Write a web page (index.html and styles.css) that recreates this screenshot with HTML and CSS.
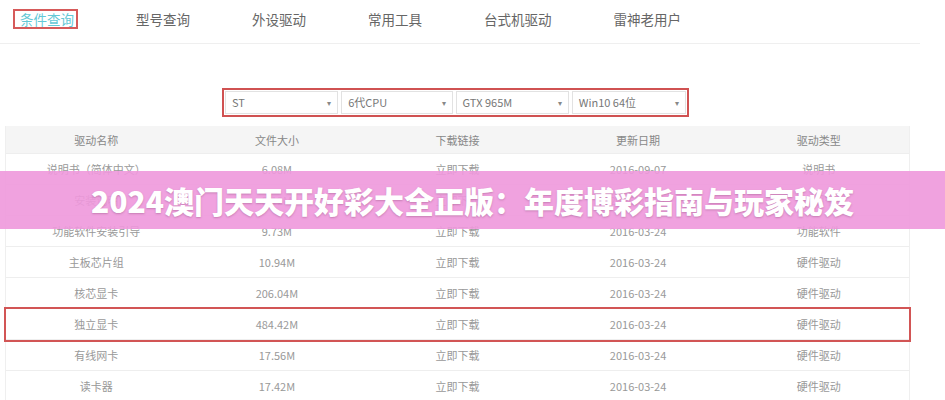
FILE: index.html
```
<!DOCTYPE html>
<html lang="zh-CN">
<head>
  <meta charset="UTF-8" />
  <title>驱动下载</title>
  <link rel="stylesheet" href="styles.css">
</head>
<body>
  <div class="nav">
    <span class="nav-item active">条件查询</span>
    <span class="nav-item">型号查询</span>
    <span class="nav-item">外设驱动</span>
    <span class="nav-item">常用工具</span>
    <span class="nav-item">台式机驱动</span>
    <span class="nav-item">雷神老用户</span>
  </div>

  <div class="filters">
    <div class="select w1">ST<span class="arrow">▾</span></div>
    <div class="select w2">6代CPU<span class="arrow">▾</span></div>
    <div class="select w3">GTX 965M<span class="arrow">▾</span></div>
    <div class="select w4">Win10 64位<span class="arrow">▾</span></div>
  </div>

  <div class="table">
    <div class="row head">
      <span>驱动名称</span><span>文件大小</span><span>下载链接</span><span>更新日期</span><span>驱动类型</span>
    </div>
    <div class="row">
      <span>说明书（简体中文）</span><span>6.08M</span><span>立即下载</span><span>2016-09-07</span><span>说明书</span>
    </div>
    <div class="row">
      <span>安装说明</span><span>5.12M</span><span>立即下载</span><span>2016-09-07</span><span>说明书</span>
    </div>
    <div class="row">
      <span>功能软件安装引导</span><span>9.73M</span><span>立即下载</span><span>2016-03-24</span><span>功能软件</span>
    </div>
    <div class="row">
      <span>主板芯片组</span><span>10.94M</span><span>立即下载</span><span>2016-03-24</span><span>硬件驱动</span>
    </div>
    <div class="row">
      <span>核芯显卡</span><span>206.04M</span><span>立即下载</span><span>2016-03-24</span><span>硬件驱动</span>
    </div>
    <div class="row picked">
      <span>独立显卡</span><span>484.42M</span><span>立即下载</span><span>2016-03-24</span><span>硬件驱动</span>
    </div>
    <div class="row">
      <span>有线网卡</span><span>17.56M</span><span>立即下载</span><span>2016-03-24</span><span>硬件驱动</span>
    </div>
    <div class="row">
      <span>读卡器</span><span>17.42M</span><span>立即下载</span><span>2016-03-24</span><span>硬件驱动</span>
    </div>
  </div>

  <div class="banner">2024澳门天天开好彩大全正版：年度博彩指南与玩家秘笈</div>
</body>
</html>
```

FILE: styles.css
```
body {
  margin: 0;
  padding: 0;
  font-family: "Noto Sans CJK SC", "Noto Sans", sans-serif;
  background-color: #fff;
  width: 945px;
  height: 400px;
  overflow: hidden;
  position: relative;
}

.nav {
  width: 920px;
  height: 44px;
  border-bottom: 1px solid #efefef;
  display: flex;
  align-items: center;
  gap: 62px;
  padding-left: 20px;
  box-sizing: border-box;
  padding-bottom: 6px;
}

.nav-item {
  font-size: 13.5px;
  color: #666;
  line-height: 16px;
}

.nav-item.active {
  color: #64c8d6;
  border: 2px solid #d65a5a;
  padding: 0 2px 0 5px;
  margin-left: -7px;
  margin-right: -4px;
}

.filters {
  margin: 44px 0 0 222px;
  width: 467px;
  height: 29px;
  border: 2px solid #d05252;
  box-sizing: border-box;
  display: flex;
  align-items: center;
  gap: 3px;
  padding: 0 1px;
}

.select {
  height: 23px;
  border: 1px solid #e2e2e2;
  box-sizing: border-box;
  font-size: 11px;
  color: #777;
  line-height: 21px;
  padding-left: 6px;
  display: flex;
  justify-content: space-between;
}

.w1 { width: 114px; }
.w2 { width: 112px; }
.w3 { width: 114px; }
.w4 { width: 115px; }

.arrow {
  font-size: 8px;
  color: #888;
  padding-right: 6px;
}

.table {
  margin: 9px 0 0 5px;
  width: 905px;
  border-left: 1px solid #efefef;
  border-right: 1px solid #efefef;
  box-sizing: border-box;
}

.row {
  display: grid;
  grid-template-columns: repeat(5, 1fr);
  height: 31px;
  align-items: center;
  border-bottom: 1px solid #eeeeee;
  box-sizing: border-box;
  font-size: 11px;
  color: #999;
  text-align: center;
}

.row.head {
  height: 28px;
  background-color: #f5f5f5;
  color: #888;
}

.row.picked {
  outline: 2px solid #d25555;
  outline-offset: 0;
}

.banner {
  position: absolute;
  top: 171px;
  left: 0;
  width: 100%;
  height: 58px;
  background: rgba(238, 152, 219, 0.9);
  color: #fff;
  font-size: 30px;
  font-weight: 900;
  line-height: 58px;
  text-align: center;
  text-shadow: 0 1px 2px rgba(120, 60, 100, 0.35);
}
```
